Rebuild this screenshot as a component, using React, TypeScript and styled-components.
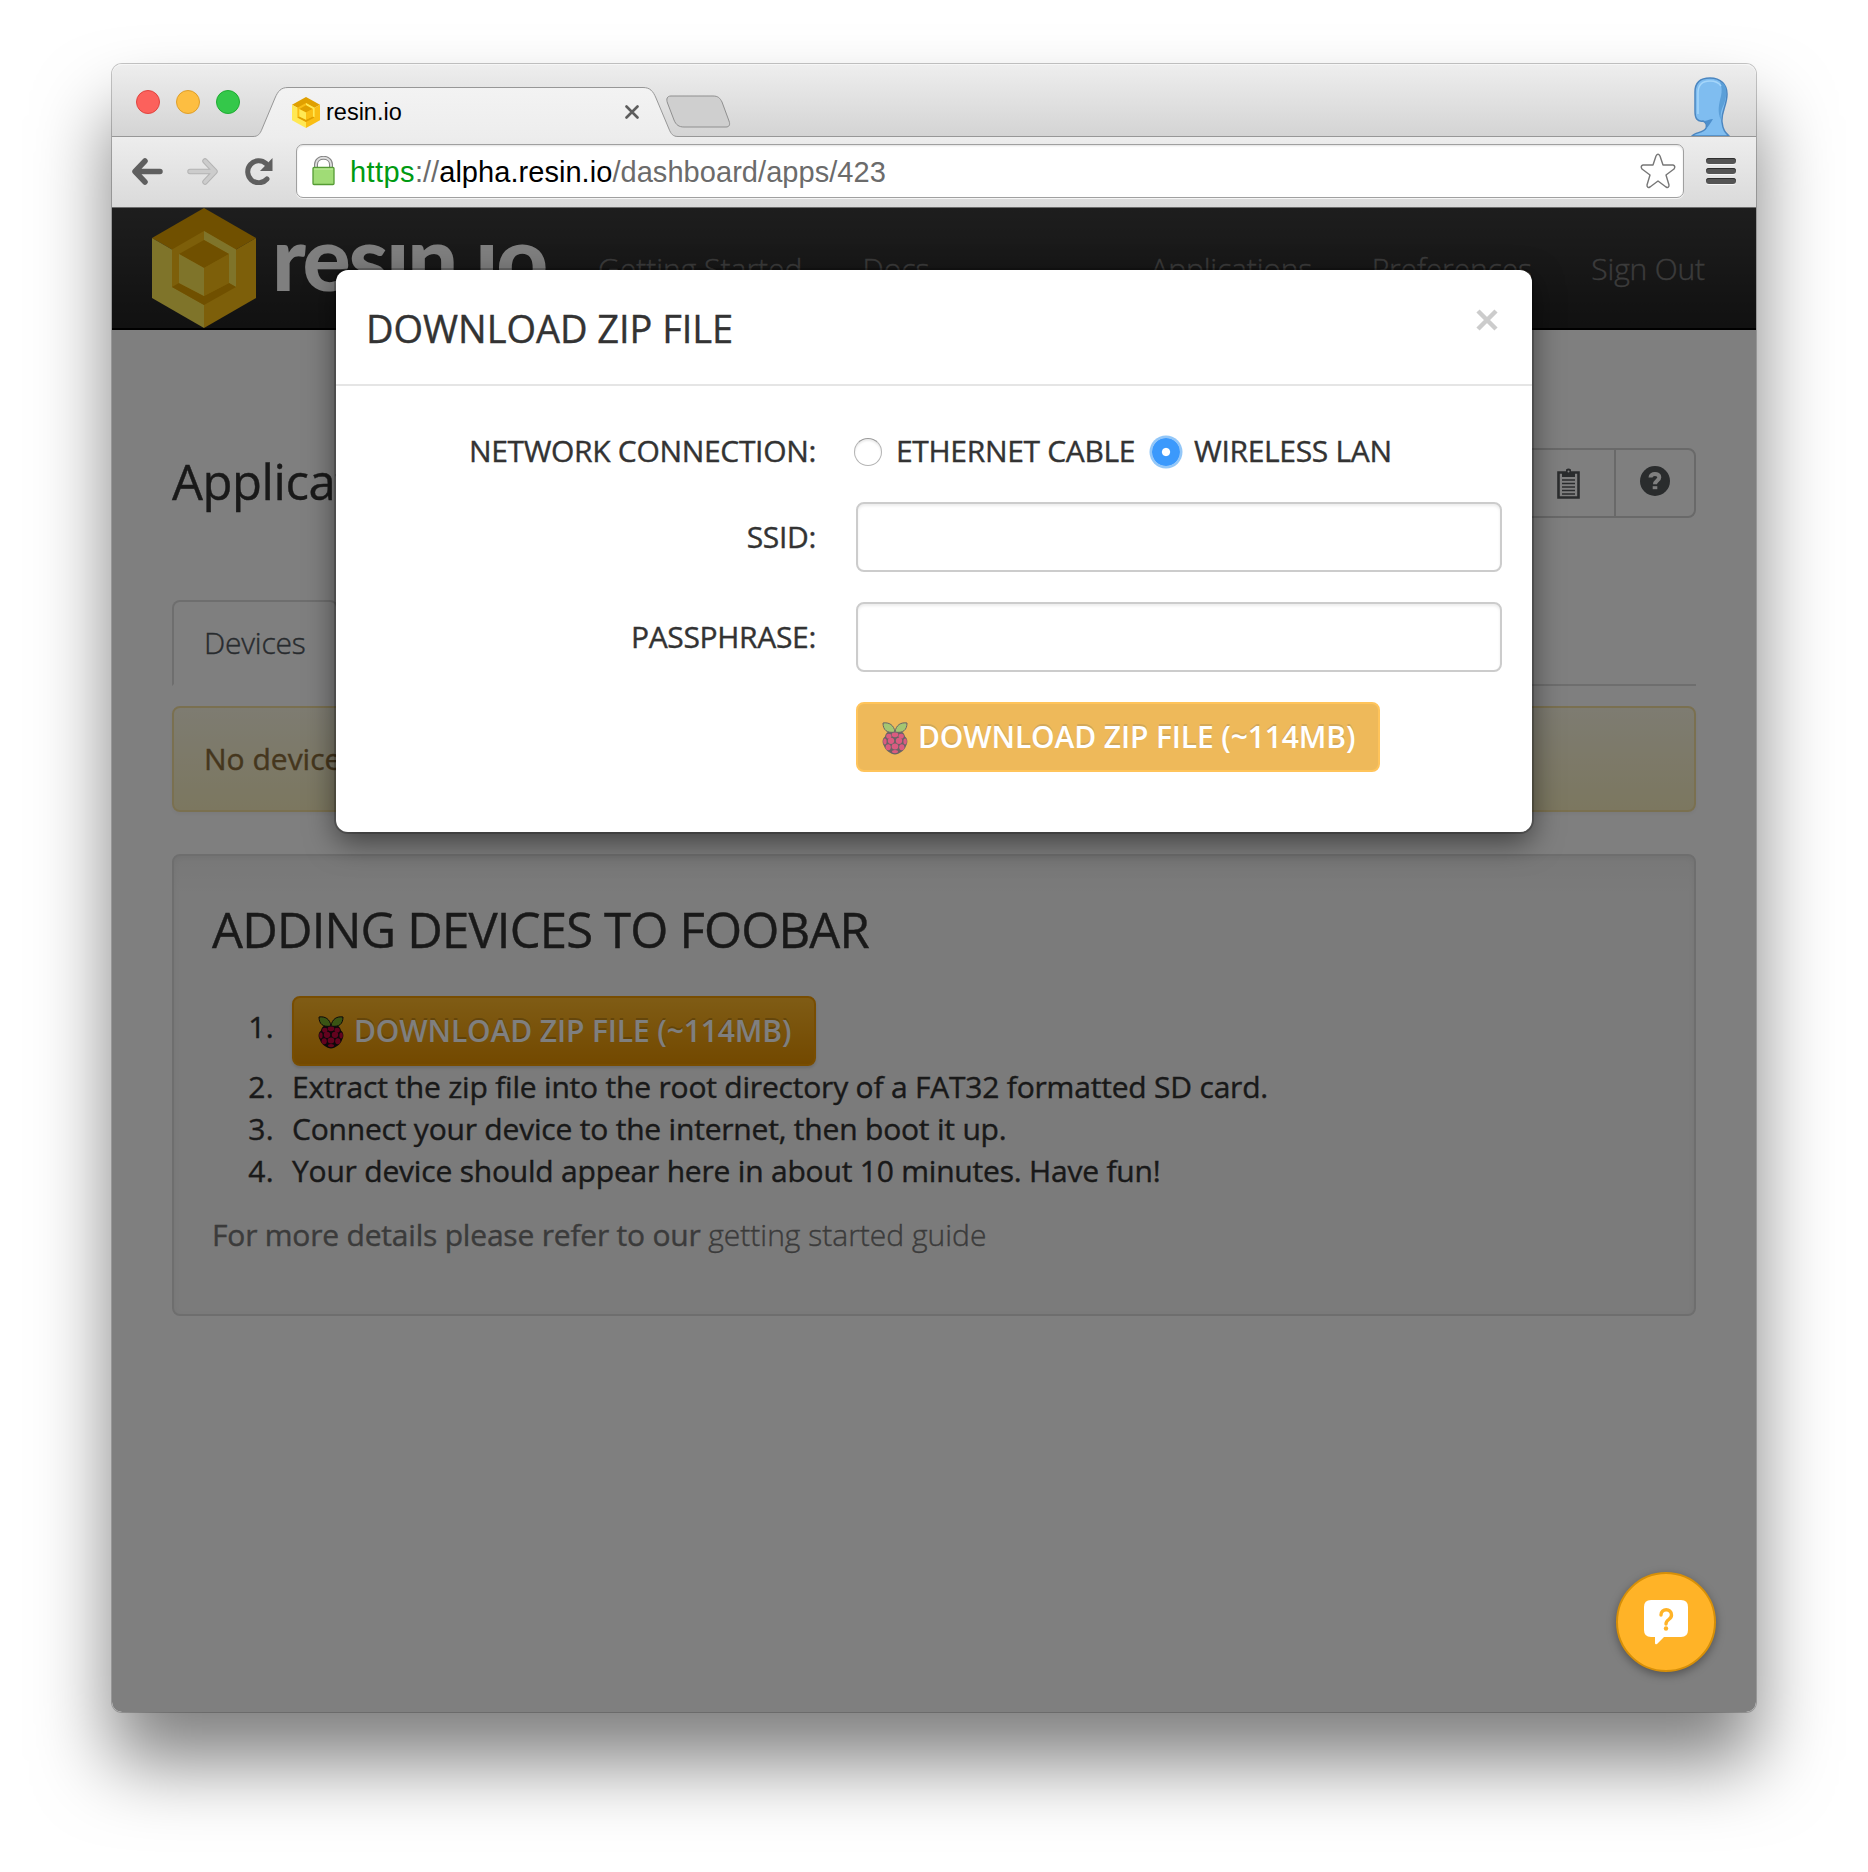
import React from "react";
import styled, { createGlobalStyle, css } from "styled-components";

const GlobalStyle = createGlobalStyle`
  * { box-sizing: border-box; }
  html, body { margin: 0; padding: 0; background: #fff; }
  body { font-family: "Open Sans", "Noto Sans", sans-serif; }
`;

const chromeFont = css`font-family: "Liberation Sans", Arial, sans-serif;`;

const Desktop = styled.div`
  width: 1868px;
  height: 1872px;
  padding: 64px 112px 0;
  overflow: hidden;
`;

const BrowserWindow = styled.div`
  width: 1644px;
  height: 1648px;
  display: flex;
  flex-direction: column;
  border-radius: 10px;
  box-shadow: 0 0 0 1px rgba(0, 0, 0, 0.22), 0 50px 76px rgba(0, 0, 0, 0.5);
`;

const TabStrip = styled.div`
  height: 73px;
  flex: none;
  display: flex;
  align-items: flex-end;
  padding-left: 24px;
  border-radius: 10px 10px 0 0;
  border-bottom: 1px solid #979797;
  background: linear-gradient(#eeeeee, #d4d4d4);
  box-shadow: inset 0 1px 0 #f6f6f6;
`;

const Lights = styled.div`
  display: flex;
  gap: 16px;
  align-self: flex-start;
  margin-top: 26px;
`;

const Light = styled.i<{ $fill: string; $edge: string }>`
  width: 24px;
  height: 24px;
  border-radius: 50%;
  background: ${(p) => p.$fill};
  border: 1px solid ${(p) => p.$edge};
`;

const Tab = styled.div`
  position: relative;
  width: 427px;
  height: 50px;
  margin: 0 0 -1px 11px;
  padding: 0 39px 0 41px;
  display: flex;
  align-items: center;
  ${chromeFont}
  font-size: 23.5px;
  color: #000;
`;

const TabShape = styled.svg`
  position: absolute;
  left: 0;
  top: 0;
  z-index: 0;
`;

const Favicon = styled.span`
  position: relative;
  display: flex;
  margin-right: 6px;
`;

const TabTitle = styled.span`
  position: relative;
  flex: 1;
`;

const TabClose = styled.svg`
  position: relative;
`;

const NewTab = styled.svg`
  margin: 0 0 7px -12px;
  position: relative;
`;

const Avatar = styled.svg`
  margin-left: auto;
  margin-right: 25px;
`;

const Toolbar = styled.div`
  height: 71px;
  flex: none;
  display: flex;
  align-items: flex-start;
  padding: 7px 20px 0;
  border-bottom: 1px solid #6c6c6c;
  background: linear-gradient(#ededed, #dadada);
`;

const NavIcon = styled.svg<{ $gap: number }>`
  margin-top: 14px;
  margin-right: ${(p) => p.$gap}px;
`;

const Omnibox = styled.div`
  width: 1388px;
  height: 54px;
  display: flex;
  align-items: center;
  padding: 0 7px 0 15px;
  border: 1px solid #a0a0a0;
  border-radius: 7px;
  background: #fff;
  box-shadow: inset 0 1px 2px rgba(0, 0, 0, 0.12), 0 1px 0 rgba(255, 255, 255, 0.7);
`;

const Url = styled.span`
  ${chromeFont}
  flex: 1;
  margin: 2px 0 0 15px;
  font-size: 29px;
  letter-spacing: 0.05px;
  color: #6b6b6b;
  white-space: nowrap;
`;

const Scheme = styled.span`
  color: #009a12;
  letter-spacing: 0.4px;
`;
const Host = styled.span`color: #000;`;

const MenuBars = styled.div`
  display: flex;
  flex-direction: column;
  gap: 4px;
  margin: 14px 0 0 22px;
`;

const Bar = styled.i`
  width: 30px;
  height: 6px;
  border-radius: 3px;
  background: #545454;
  box-shadow: inset 0 1px 0 #2f2f2f, 0 1px 0 #f6f6f6;
`;

const Page = styled.main`
  position: relative;
  flex: 1;
  background: #fff;
  border-radius: 0 0 10px 10px;
  overflow: hidden;
  font-size: 30px;
  line-height: 42px;
  letter-spacing: -0.2px;
  color: #333;
  -webkit-text-stroke: 0.4px;
`;

const Navbar = styled.nav`
  height: 122px;
  display: flex;
  align-items: center;
  padding: 1px 51px 0 40px;
  background: linear-gradient(#3c3c3c, #222222);
  border-bottom: 2px solid #000;
`;

const Brand = styled.div`
  width: 446px;
  height: 120px;
  flex: none;
  display: flex;
  align-items: center;
  gap: 16px;
  margin-top: -1px;
`;

const BrandName = styled.span`
  font-family: Lato, sans-serif;
  font-weight: 900;
  font-size: 90px;
  line-height: 100px;
  letter-spacing: -2.3px;
  color: #fff;
  margin-top: -25px;
  -webkit-text-stroke: 0;
`;

const NavLinks = styled.div<{ $end?: boolean }>`
  display: flex;
  gap: ${(p) => (p.$end ? 59.5 : 60)}px;
  letter-spacing: ${(p) => (p.$end ? -0.15 : 0)}px;
  ${(p) => p.$end && "margin-left: auto;"}
`;

const NavLink = styled.a`
  font-weight: 300;
  color: #777777;
  white-space: nowrap;
`;

const Content = styled.div`
  padding: 118px 60px 0;
`;

const HeaderRow = styled.header`
  display: flex;
  justify-content: space-between;
  align-items: flex-start;
  height: 70px;
  margin-bottom: 82px;
`;

const Heading = styled.h2`
  margin: 0;
  font-size: 49px;
  line-height: 54px;
  font-weight: 400;
  letter-spacing: -0.82px;
  color: #333;
`;

const PageHeading = styled(Heading)`
  margin-top: 6px;
  letter-spacing: -0.45px;
`;

const ButtonGroup = styled.div`
  display: flex;
  border: 2px solid #d2d2d2;
  border-radius: 8px;
`;

const GroupButton = styled.span<{ $first?: boolean }>`
  width: ${(p) => (p.$first ? 92 : 80)}px;
  height: 66px;
  display: flex;
  align-items: center;
  justify-content: center;
  padding-bottom: ${(p) => (p.$first ? 0 : 4)}px;
  border-left: ${(p) => (p.$first ? "0" : "2px solid #d2d2d2")};
`;

const Tabs = styled.div`
  height: 86px;
  display: flex;
  border-bottom: 2px solid #dddddd;
  margin-bottom: 20px;
`;

const PageTab = styled.span`
  height: 86px;
  padding: 20px 30px 0;
  border: 2px solid #dddddd;
  border-bottom-color: #fff;
  border-radius: 8px 8px 0 0;
  background: #fff;
  font-weight: 300;
  color: #50565c;
`;

const Alert = styled.div`
  height: 106px;
  padding: 30px;
  margin-bottom: 42px;
  border: 2px solid #f5e0a0;
  border-radius: 8px;
  background: linear-gradient(#fcf8e3, #f8efc0);
  color: #8a6d3b;
  letter-spacing: 0;
  box-shadow: 0 2px 4px rgba(0, 0, 0, 0.05);
`;

const Well = styled.section`
  height: 462px;
  padding: 46px 38px;
  border: 2px solid #dcdcdc;
  border-radius: 8px;
  background: linear-gradient(#f0f0f0, #f6f6f6 8%);
  box-shadow: inset 0 2px 6px rgba(0, 0, 0, 0.05);
`;

const Steps = styled.ol`
  list-style: none;
  margin: 40px 0 22px;
  padding: 0;
`;

const Step = styled.li`
  display: flex;
  gap: 18px;
`;

const StepNumber = styled.span<{ $drop?: boolean }>`
  width: 62px;
  text-align: right;
  letter-spacing: 0.3px;
  padding-top: ${(p) => (p.$drop ? 10 : 0)}px;
`;

const Note = styled.p`
  margin: 0;
  color: #777;
`;

const NoteLink = styled.a`
  font-weight: 300;
  letter-spacing: 0;
  color: #777;
`;

const DownloadButton = styled.button<{ $dimmed?: boolean }>`
  width: 524px;
  height: 70px;
  display: flex;
  align-items: center;
  gap: 10px;
  padding: 0 22px 0 24px;
  border: 2px solid #ffa504;
  border-radius: 8px;
  font: 600 30px/42px "Open Sans", "Noto Sans", sans-serif;
  letter-spacing: -0.13px;
  color: #fff;
  white-space: nowrap;
  text-shadow: 0 -2px 0 rgba(0, 0, 0, 0.2);
  -webkit-text-stroke: 0;
  ${(p) =>
    p.$dimmed
      ? css`
          background: #e59503;
          opacity: 0.65;
        `
      : css`
          border-color: #f09a02;
          background: linear-gradient(#ffb82a, #e69200);
          box-shadow: 0 2px 3px rgba(0, 0, 0, 0.12);
        `}
`;

const Backdrop = styled.div`
  position: absolute;
  inset: 0;
  background: rgba(0, 0, 0, 0.5);
`;

const Modal = styled.div`
  position: absolute;
  left: 224px;
  top: 62px;
  width: 1196px;
  height: 562px;
  background: #fff;
  border-radius: 12px;
  box-shadow: 0 0 0 2px rgba(0, 0, 0, 0.2), 0 10px 30px rgba(0, 0, 0, 0.5);
`;

const ModalHeader = styled.div`
  display: flex;
  justify-content: space-between;
  padding: 31px 29px 29px 30px;
  border-bottom: 2px solid #e5e5e5;
`;

const ModalTitle = styled.h4`
  margin: 0;
  font-size: 38px;
  line-height: 54px;
  font-weight: 400;
  letter-spacing: -0.05px;
`;

const CloseIcon = styled.svg`
  margin: 8px 5px 0 0;
`;

const Form = styled.form`
  display: grid;
  grid-template-columns: 450px 646px;
  grid-template-rows: 56px 70px 70px 70px;
  gap: 30px 40px;
  padding: 30px;
  letter-spacing: -0.32px;
`;

const Label = styled.label`
  padding-top: 14px;
  text-align: right;
`;

const Radios = styled.div`
  display: flex;
  align-items: flex-start;
  padding-top: 14px;
  margin-left: -2px;
`;

const Radio = styled.i<{ $on?: boolean }>`
  width: 28px;
  height: 28px;
  margin: 8px 14px 0 0;
  flex: none;
  border-radius: 50%;
  ${(p) =>
    p.$on
      ? css`
          background: radial-gradient(circle, #fff 3.6px, #3b99fc 4.6px);
          box-shadow: 0 0 0 2.5px #93c7f8;
        `
      : css`
          border: 1px solid #b4b4b4;
          border-top-color: #9a9a9a;
          box-shadow: inset 0 2px 2px rgba(0, 0, 0, 0.08);
        `}
`;

const RadioText = styled.span<{ $width: number }>`
  width: ${(p) => p.$width}px;
  white-space: nowrap;
`;

const TextInput = styled.input`
  width: 646px;
  height: 70px;
  border: 2px solid #cccccc;
  border-radius: 8px;
  background: #fff;
  outline: 0;
  box-shadow: inset 0 2px 3px rgba(0, 0, 0, 0.075);
`;

const Fab = styled.button`
  position: absolute;
  left: 1504px;
  top: 1364px;
  width: 100px;
  height: 100px;
  padding: 0;
  border: 2px solid #d68f08;
  border-radius: 50%;
  background: #ffb327;
  box-shadow: 0 3px 10px rgba(0, 0, 0, 0.35);
`;

const Hexagon = ({ width, height }: { width: number; height: number }) => (
  <svg width={width} height={height} viewBox="0 0 104 120" preserveAspectRatio="none">
    <path d="M52 0 104 30 52 60 0 30Z" fill="#e0a000" />
    <path d="M0 30 52 60V120L0 90Z" fill="#ffe854" />
    <path d="M104 30 52 60V120L104 90Z" fill="#fabe14" />
    <path d="M52 23 84 41.500V79L52 97 20 79V41.500Z" fill="#fabe14" />
    <path d="M52 23V32L77 46V75L84 79V41.500Z" fill="#ffe854" />
    <path d="M20 79 27 75 52 88 77 75 84 79 52 97Z" fill="#e0a000" />
    <path d="M52 32 77 46 52 60 27 46Z" fill="#e0a000" />
    <path d="M27 46 52 60V88L27 75Z" fill="#ffe854" />
    <path d="M77 46 52 60V88L77 75Z" fill="#fabe14" />
  </svg>
);

const drupelets: [number, number, number, number][] = [
  [13, 12.8, 3.3, 2.4],
  [6.8, 14.2, 2.6, 2.4],
  [19.2, 14.2, 2.6, 2.4],
  [9, 18.8, 3.2, 3.1],
  [17, 18.8, 3.2, 3.1],
  [2.9, 19.6, 1.7, 3],
  [23.1, 19.6, 1.7, 3],
  [13, 24.4, 3.3, 3],
  [6.2, 25.2, 2.6, 3],
  [19.8, 25.2, 2.6, 3],
  [13, 29.6, 3, 1.7],
];

const RaspberryMark = styled.svg`
  flex: none;
  margin-top: 3px;
`;

const Raspberry = () => (
  <RaspberryMark width="26" height="33" viewBox="0 0 26 33">
    <path
      d="M13 8.500C17 7 22 10 23 14.500C26 17 26 21 24 24C23 28 17 32.500 13 32.500S3 28 2 24C0 21 0 17 3 14.500C4 10 9 7 13 8.500Z"
      fill="#1b1014"
    />
    <path d="M13 10C12 3 7 0 1 1C1 8 5 11.500 13 10Z" fill="#75a928" stroke="#1b1014" strokeWidth="1" />
    <path d="M13 10C14 3 19 0 25 1C25 8 21 11.500 13 10Z" fill="#75a928" stroke="#1b1014" strokeWidth="1" />
    {drupelets.map(([cx, cy, rx, ry]) => (
      <ellipse key={`${cx}-${cy}`} cx={cx} cy={cy} rx={rx} ry={ry} fill="#c7053d" />
    ))}
  </RaspberryMark>
);

const steps = [
  "Extract the zip file into the root directory of a FAT32 formatted SD card.",
  "Connect your device to the internet, then boot it up.",
  "Your device should appear here in about 10 minutes. Have fun!",
];

const Download = ({ dimmed }: { dimmed?: boolean }) => (
  <DownloadButton type="button" $dimmed={dimmed}>
    <Raspberry />
    <span>DOWNLOAD ZIP FILE (~114MB)</span>
  </DownloadButton>
);

const BrowserChrome = () => (
  <>
    <TabStrip>
      <Lights>
        <Light $fill="#fc615c" $edge="#e0443f" />
        <Light $fill="#fdbe41" $edge="#df9f2a" />
        <Light $fill="#34c84a" $edge="#1fac32" />
      </Lights>
      <Tab>
        <TabShape width="427" height="50" viewBox="0 0 427 50">
          <defs>
            <linearGradient id="tabFill" x1="0" x2="0" y1="0" y2="1">
              <stop offset="0" stopColor="#f3f3f3" />
              <stop offset="1" stopColor="#ededed" />
            </linearGradient>
          </defs>
          <path
            d="M0 49.500H2C7 49.500 9 47 11 42L24 11C27 4 30 .500 37 .500H392C399 .500 402 4 405 11L418 42C420 47 422 49.500 427 49.500V50H0Z"
            fill="url(#tabFill)"
          />
          <path
            d="M0 49.500H2C7 49.500 9 47 11 42L24 11C27 4 30 .500 37 .500H392C399 .500 402 4 405 11L418 42C420 47 422 49.500 427 49.500"
            fill="none"
            stroke="#979797"
          />
        </TabShape>
        <Favicon>
          <Hexagon width={28} height={31} />
        </Favicon>
        <TabTitle>resin.io</TabTitle>
        <TabClose width="14" height="14" viewBox="0 0 14 14">
          <path d="M1.500 1.500 12.500 12.500M12.500 1.500 1.500 12.500" stroke="#5d5d5d" strokeWidth="2.600" strokeLinecap="round" />
        </TabClose>
      </Tab>
      <NewTab width="66" height="34" viewBox="0 0 66 34">
        <path
          d="M5 1H47C52 1 54 3 56 7L63 26C64.500 30 63 32 60 32H18C13 32 10 30 8 25L1.500 8C0 4 1 1 5 1Z"
          fill="#cfcfcf"
          stroke="#8f8f8f"
        />
      </NewTab>
      <Avatar width="42" height="60" viewBox="0 0 42 60">
        <path
          d="M3 60C6 56 15 57 17 52C18 49 17 46 14 45C8 46 6 42 6 35V16C6 7 11 2 21 2C32 2 38 9 38 18C38 30 32 35 33 46C34 55 37 57 40 60Z"
          fill="#7fbdf0"
          stroke="#4b86c0"
          strokeWidth="1.500"
        />
        <path d="M35 8C38 12 38 20 35 28C32 34 31 38 32 44C28 36 30 28 32 20C33 15 33 11 31 6Z" fill="#5b9fd8" />
        <path d="M17 53C19 49 17 46 14 45C18 45 21 43 24 43C22 46 20 50 17 53Z" fill="#4d8fcc" />
        <path d="M9 38V17C9 9 13 5 21 5C27 5 30 7 32 10" fill="none" stroke="#a5d6fa" strokeWidth="1.500" />
      </Avatar>
    </TabStrip>
    <Toolbar>
      <NavIcon $gap={24} width="31" height="27" viewBox="0 0 31 27">
        <path d="M13 3 3 13.500 13 24M4 13.500H28" fill="none" stroke="#5f5f5f" strokeWidth="5.500" strokeLinecap="round" strokeLinejoin="round" />
      </NavIcon>
      <NavIcon $gap={27} width="31" height="27" viewBox="0 0 31 27">
        <path d="M18 3 28 13.500 18 24M27 13.500H3" fill="none" stroke="#b4b4b4" strokeWidth="5.500" strokeLinecap="round" strokeLinejoin="round" />
        <path d="M18 3 28 13.500 18 24M27 13.500H3" fill="none" stroke="#cccccc" strokeWidth="3.500" strokeLinecap="round" strokeLinejoin="round" />
      </NavIcon>
      <NavIcon $gap={23} width="28" height="27" viewBox="0 0 28 27">
        <path d="M22 21A11 11 0 1 1 21 5.500" fill="none" stroke="#5f5f5f" strokeWidth="5" strokeLinecap="round" />
        <path d="M27.500 0V13H15Z" fill="#5f5f5f" />
      </NavIcon>
      <Omnibox>
        <svg width="23" height="30" viewBox="0 0 23 30">
          <path d="M4 12V8.500C4 -.500 19 -.500 19 8.500V12" fill="none" stroke="#858585" strokeWidth="4" />
          <path d="M4 12V8.500C4 -.500 19 -.500 19 8.500V12" fill="none" stroke="#dedede" strokeWidth="1.800" />
          <rect x="1" y="11.500" width="21" height="17" rx="1" fill="#a0dc76" stroke="#559b34" strokeWidth="1.300" />
          <path d="M2 13H21" stroke="#c5f0a5" />
        </svg>
        <Url>
          <Scheme>https</Scheme>://<Host>alpha.resin.io</Host>/dashboard/apps/423
        </Url>
        <svg width="36" height="36" viewBox="0 0 36 36">
          <path
            d="M16 3Q18 -.500 20 3L23 12H33Q36 13 34 16L26 22 29 32Q29 35.500 26 34L18 28 10 34Q7 35.500 7 32L10 22 2 16Q0 13 3 12H13Z"
            fill="#fff"
            stroke="#777"
            strokeWidth="1.400"
            strokeLinejoin="round"
          />
        </svg>
      </Omnibox>
      <MenuBars>
        <Bar />
        <Bar />
        <Bar />
      </MenuBars>
    </Toolbar>
  </>
);

const Dashboard = () => (
  <>
    <Navbar>
      <Brand>
        <Hexagon width={104} height={120} />
        <BrandName>resın.ıo</BrandName>
      </Brand>
      <NavLinks>
        <NavLink>Getting Started</NavLink>
        <NavLink>Docs</NavLink>
      </NavLinks>
      <NavLinks $end>
        <NavLink>Applications</NavLink>
        <NavLink>Preferences</NavLink>
        <NavLink>Sign Out</NavLink>
      </NavLinks>
    </Navbar>
    <Content>
      <HeaderRow>
        <PageHeading>Application</PageHeading>
        <ButtonGroup>
          <GroupButton $first>
            <svg width="23" height="31" viewBox="0 0 23 31">
              <path d="M1.500 4.500H21.500V29.500H1.500Z" fill="none" stroke="#55585b" strokeWidth="2.600" />
              <path d="M5 9V5L9 4V1.500Q11.500 -.500 14 1.500V4L18 5V9Z" fill="#55585b" />
              <path d="M5 12H18M5 15.500H18M5 19H18M5 22.500H18M5 26H18" stroke="#55585b" strokeWidth="1.600" />
              <circle cx="11.500" cy="3.500" r="1" fill="#fff" />
            </svg>
          </GroupButton>
          <GroupButton>
            <svg width="30" height="30" viewBox="0 0 30 30">
              <circle cx="15" cy="15" r="15" fill="#55585b" />
              <path d="M10.500 11.500C10.500 6.800 19.300 6.800 19.300 11.300C19.300 14.500 15 14.500 15 18.300" fill="none" stroke="#fff" strokeWidth="4" />
              <path d="M12.700 20.200H17.300V23.200H12.700Z" fill="#fff" />
            </svg>
          </GroupButton>
        </ButtonGroup>
      </HeaderRow>
      <Tabs>
        <PageTab>Devices</PageTab>
      </Tabs>
      <Alert>No devices</Alert>
      <Well>
        <Heading>ADDING DEVICES TO FOOBAR</Heading>
        <Steps>
          <Step>
            <StepNumber $drop>1.</StepNumber>
            <Download />
          </Step>
          {steps.map((text, i) => (
            <Step key={text}>
              <StepNumber>{i + 2}.</StepNumber>
              <span>{text}</span>
            </Step>
          ))}
        </Steps>
        <Note>
          For more details please refer to our <NoteLink>getting started guide</NoteLink>
        </Note>
      </Well>
    </Content>
  </>
);

const DownloadDialog = () => (
  <Modal role="dialog">
    <ModalHeader>
      <ModalTitle>DOWNLOAD ZIP FILE</ModalTitle>
      <CloseIcon width="22" height="22" viewBox="0 0 22 22">
        <path d="M2 2 20 20M20 2 2 20" stroke="#cccccc" strokeWidth="4.500" />
      </CloseIcon>
    </ModalHeader>
    <Form>
      <Label>NETWORK CONNECTION:</Label>
      <Radios>
        <Radio />
        <RadioText $width={256}>ETHERNET CABLE</RadioText>
        <Radio $on />
        <RadioText $width={200}>WIRELESS LAN</RadioText>
      </Radios>
      <Label>SSID:</Label>
      <TextInput />
      <Label>PASSPHRASE:</Label>
      <TextInput />
      <span />
      <Download dimmed />
    </Form>
  </Modal>
);

export default function App() {
  return (
    <Desktop>
      <GlobalStyle />
      <BrowserWindow>
        <BrowserChrome />
        <Page>
          <Dashboard />
          <Backdrop />
          <DownloadDialog />
          <Fab>
            <svg width="96" height="96" viewBox="0 0 96 96">
              <path
                d="M33 26H63Q70 26 70 33V56Q70 63 63 63H46L39 70Q37 71 37 69V63H33Q26 63 26 56V33Q26 26 33 26Z"
                fill="#fff"
              />
              <path d="M43 41C43 34 53.500 34 53.500 41C53.500 46 48 45 48 50" fill="none" stroke="#ffb327" strokeWidth="3.400" strokeLinecap="round" />
              <circle cx="48" cy="54.500" r="2.200" fill="#ffb327" />
            </svg>
          </Fab>
        </Page>
      </BrowserWindow>
    </Desktop>
  );
}
